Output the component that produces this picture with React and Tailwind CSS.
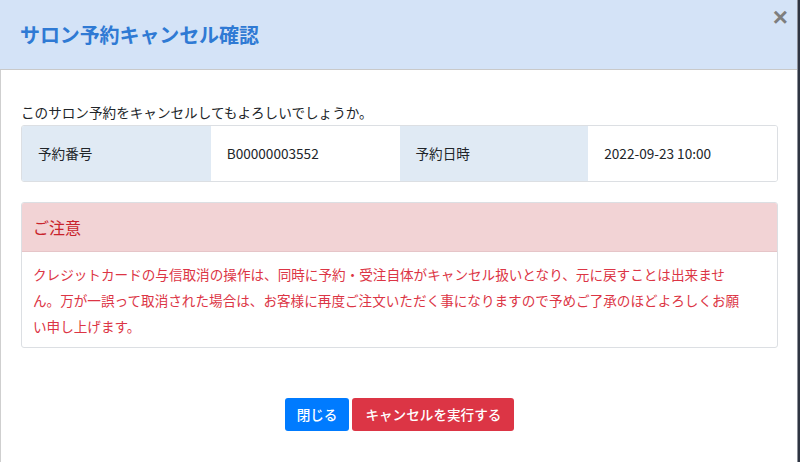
export default function App() {
  const font = { fontFamily: '"Noto Sans CJK JP", "Noto Sans", sans-serif' };
  return (
    <div className="w-[800px] h-[462px] overflow-hidden flex bg-white" style={font}>
      <div className="w-[797px] h-full flex flex-col">
        <div className="relative h-[70px] shrink-0 bg-[#d4e3f7] border-b border-[#c9c9c9] flex items-center px-5">
          <h1 className="text-[20px] font-bold text-[#2f7ad4] leading-none tracking-[-0.1px]">サロン予約キャンセル確認</h1>
          <button className="absolute right-[9px] top-[2px] text-[26px] leading-[30px] font-bold text-[#7e7e7e]" style={{ fontFamily: '"Liberation Sans", sans-serif' }}>×</button>
        </div>
        <div className="flex-1 border-l border-[#cfcfcf] pl-5 pr-[19px] pt-[32px]">
          <p className="text-[13.6px] leading-[20px] text-[#212529] mb-[3px]">このサロン予約をキャンセルしてもよろしいでしょうか。</p>
          <div className="grid grid-cols-4 border border-[#dcdfe3] rounded-[3px] overflow-hidden text-[13.6px] text-[#212529]">
            <div className="h-[55px] flex items-center pl-4 bg-[#e0eaf4]">予約番号</div>
            <div className="h-[55px] flex items-center pl-4 bg-white">B00000003552</div>
            <div className="h-[55px] flex items-center pl-4 bg-[#e0eaf4]">予約日時</div>
            <div className="h-[55px] flex items-center pl-4 bg-white">2022-09-23 10:00</div>
          </div>
          <div className="mt-5 border border-[#dcdfe3] rounded-[3px] overflow-hidden">
            <div className="h-[49px] bg-[#f2d3d5] border-b border-[#e6c5c8] flex items-center pl-[11px] text-[16px] text-[#c8232c]">ご注意</div>
            <div className="pl-[11px] pr-[32px] pt-[9px] pb-[8px] text-[13.6px] leading-[26px] text-[#dc3545]">
              クレジットカードの与信取消の操作は、同時に予約・受注自体がキャンセル扱いとなり、元に戻すことは出来ません。万が一誤って取消された場合は、お客様に再度ご注文いただく事になりますので予めご了承のほどよろしくお願い申し上げます。
            </div>
          </div>
          <div className="mt-[50px] flex justify-center gap-[3px]">
            <button className="h-[33px] px-3 rounded-[3px] bg-[#007bff] text-white text-[13.6px] font-medium">閉じる</button>
            <button className="h-[33px] px-[13px] rounded-[3px] bg-[#dc3545] text-white text-[13.6px] font-medium">キャンセルを実行する</button>
          </div>
        </div>
      </div>
      <div className="w-[3px] h-full border-l border-[#8c9099] bg-[#2e3442]"></div>
    </div>
  );
}
